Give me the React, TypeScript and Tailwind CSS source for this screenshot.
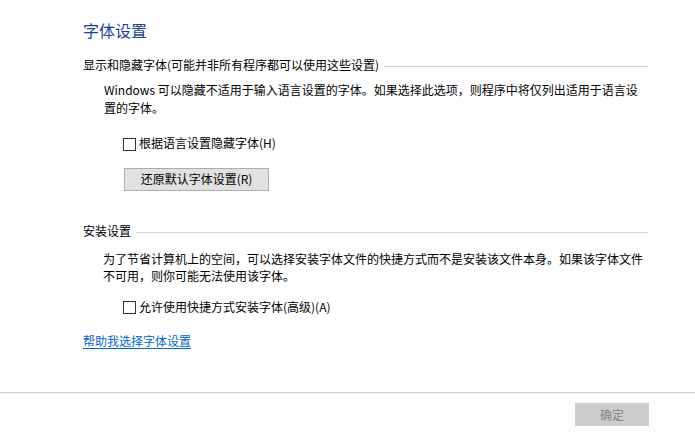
import React from "react";

const font = { fontFamily: '"Noto Sans CJK SC", "Noto Sans", sans-serif' };

const Checkbox = ({ label }: { label: string }) => (
    <label className="flex items-center gap-[3px] h-[18px] leading-[18px] text-[12px] text-black">
        <span className="w-[13px] h-[13px] border border-[#333333] bg-white mt-[2px] shrink-0"></span>
        <span>{label}</span>
    </label>
);

const SectionHeading = ({ title }: { title: string }) => (
    <div className="flex items-center w-[565px]">
        <span className="text-[12px] leading-[18px] text-black whitespace-nowrap">{title}</span>
        <div className="flex-1 h-px bg-[#d5d5d5] ml-[5px] mt-[3px]"></div>
    </div>
);

const App = () => {
    return (
        <div className="w-[695px] h-[447px] bg-white flex flex-col overflow-hidden" style={font}>
            {/* Main settings body */}
            <div className="h-[392px] pl-[83px] pt-[20px] flex flex-col">
                <h1 className="text-[16px] leading-[20px] text-[#1e3f94] font-normal">字体设置</h1>

                <div className="mt-[16px]">
                    <SectionHeading title="显示和隐藏字体(可能并非所有程序都可以使用这些设置)" />
                </div>
                <p className="mt-[7px] pl-[21px] text-[12px] leading-[18px] text-black whitespace-nowrap">
                    Windows 可以隐藏不适用于输入语言设置的字体。如果选择此选项，则程序中将仅列出适用于语言设
                    <br />
                    置的字体。
                </p>
                <div className="mt-[17px] pl-[40px]">
                    <Checkbox label="根据语言设置隐藏字体(H)" />
                </div>
                <div className="mt-[13px] pl-[41px]">
                    <button className="w-[145px] h-[23px] bg-[#e1e1e1] border border-[#adadad] text-[12px] text-black leading-none">
                        还原默认字体设置(R)
                    </button>
                </div>

                <div className="mt-[31px]">
                    <SectionHeading title="安装设置" />
                </div>
                <p className="mt-[10px] pl-[20px] text-[12px] leading-[17px] text-black whitespace-nowrap">
                    为了节省计算机上的空间，可以选择安装字体文件的快捷方式而不是安装该文件本身。如果该字体文件
                    <br />
                    不可用，则你可能无法使用该字体。
                </p>
                <div className="mt-[14px] pl-[40px]">
                    <Checkbox label="允许使用快捷方式安装字体(高级)(A)" />
                </div>
                <div className="mt-[11px]">
                    <a href="#" className="text-[12px] leading-[18px] text-[#0066cc] underline underline-offset-2">
                        帮助我选择字体设置
                    </a>
                </div>
            </div>

            {/* Footer */}
            <div className="flex-1 border-t border-[#cccccc] bg-[#fdfdfd] flex justify-end pt-[10px] pr-[46px]">
                <button
                    disabled
                    className="w-[74px] h-[23px] bg-[#cccccc] border border-[#cccccc] text-[12px] text-[#838383] leading-none"
                >
                    确定
                </button>
            </div>
        </div>
    );
};

export default App;
